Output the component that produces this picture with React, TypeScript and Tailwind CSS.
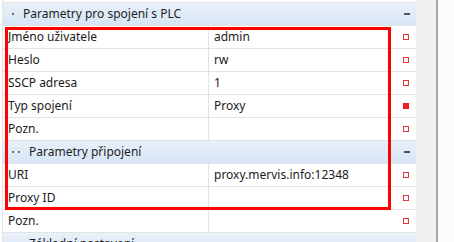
import type { ReactNode } from "react";

type Row =
  | { kind: "group"; label: string; depth: number }
  | { kind: "prop"; name: string; value: string; filled?: boolean };

const rows: Row[] = [
  { kind: "group", label: "Parametry pro spojení s PLC", depth: 1 },
  { kind: "prop", name: "Jméno uživatele", value: "admin" },
  { kind: "prop", name: "Heslo", value: "rw" },
  { kind: "prop", name: "SSCP adresa", value: "1" },
  { kind: "prop", name: "Typ spojení", value: "Proxy", filled: true },
  { kind: "prop", name: "Pozn.", value: "" },
  { kind: "group", label: "Parametry připojení", depth: 2 },
  { kind: "prop", name: "URI", value: "proxy.mervis.info:12348" },
  { kind: "prop", name: "Proxy ID", value: "" },
  { kind: "prop", name: "Pozn.", value: "" },
  { kind: "group", label: "Základní nastavení", depth: 2 },
];

export default function App() {
  return (
    <div className="relative flex h-[242px] w-[454px] overflow-hidden bg-white font-['Segoe_UI','Noto_Sans',sans-serif] text-[12px] text-[#1b1b1b]">
      <div className="w-[3px] shrink-0 border-r border-[#e3e3e3]" />

      <div className="flex w-[413px] shrink-0 flex-col">
        <div className="h-[3px] shrink-0 border-b border-[#e3e3e3]" />
        {rows.map((row, i) =>
          row.kind === "group" ? (
            <GroupRow key={i} label={row.label} depth={row.depth} />
          ) : (
            <PropRow key={i} name={row.name} value={row.value} filled={row.filled} />
          )
        )}
      </div>

      <div className="w-[20px] shrink-0 bg-[#f0f0f0]" />
      <div className="w-[2px] shrink-0 bg-[#a9a9a9]" />
      <div className="flex-1 bg-[#fbfbfb]" />

      {/* red annotation frame */}
      <div className="pointer-events-none absolute left-[5px] top-[27px] h-[183px] w-[386px] border-[3px] border-[#ff0000]" />
    </div>
  );
}

function GroupRow({ label, depth }: { label: string; depth: number }) {
  return (
    <div className="flex h-[23px] shrink-0 items-center border-b border-[#e3e3e3] bg-gradient-to-b from-[#e9f0f9] to-[#d6e5f6]">
      <div className="flex items-center gap-[4px] pl-[9px]">
        {Array.from({ length: depth }).map((_, i) => (
          <span key={i} className="h-[2px] w-[2px] bg-[#6b6b6b]" />
        ))}
      </div>
      <span className="ml-[9px] flex-1 text-[#1e1e1e]">{label}</span>
      <span className="mr-[6px] h-[2px] w-[6px] bg-[#555]" />
    </div>
  );
}

function PropRow({
  name,
  value,
  filled,
}: {
  name: string;
  value: string;
  filled?: boolean;
}) {
  return (
    <div className="flex h-[23px] shrink-0 border-b border-[#e3e3e3]">
      <Cell className="w-[206px] border-r border-[#e3e3e3] pl-[5px]">{name}</Cell>
      <Cell className="flex-1 pl-[5px]">{value}</Cell>
      <div className="flex w-[20px] items-center justify-center pr-[1px]">
        <span
          className={
            filled
              ? "h-[6px] w-[6px] bg-[#ee1c24]"
              : "h-[6px] w-[6px] border-[1.5px] border-[#e8323a] bg-white"
          }
        />
      </div>
    </div>
  );
}

function Cell({ className, children }: { className: string; children: ReactNode }) {
  return (
    <div className={`flex items-center overflow-hidden whitespace-nowrap ${className}`}>
      {children}
    </div>
  );
}
